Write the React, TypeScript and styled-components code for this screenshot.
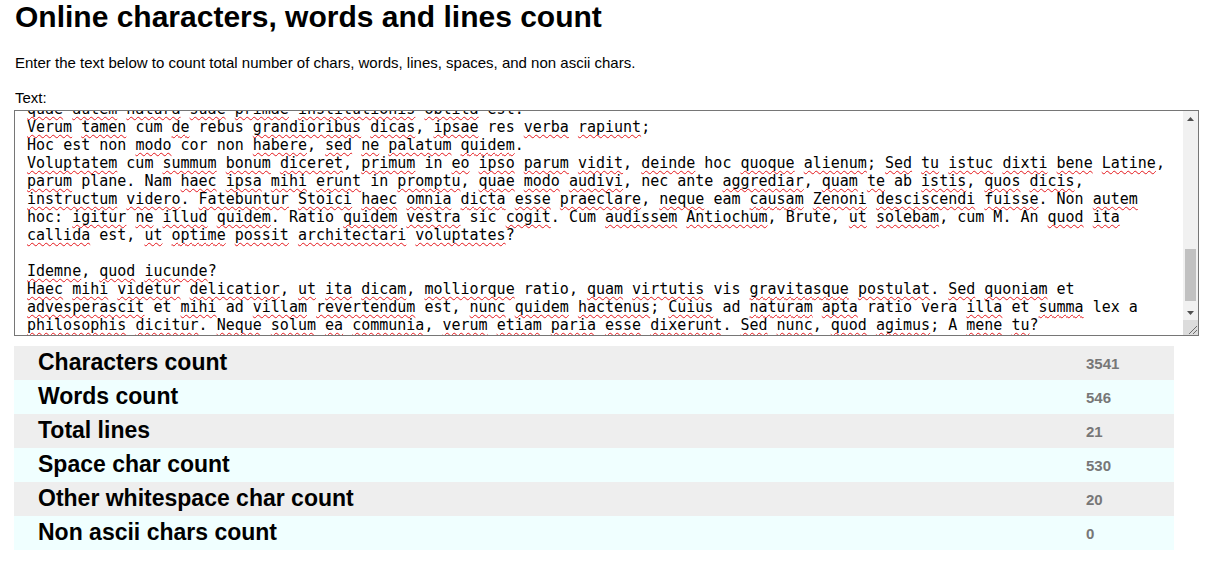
import React, { useLayoutEffect, useRef, useState } from "react";
import styled, { createGlobalStyle } from "styled-components";

const GlobalStyle = createGlobalStyle`
  html, body {
    margin: 0;
    padding: 0;
    background: #fff;
  }
  body {
    font-family: "Liberation Sans", Arial, sans-serif;
    color: #000;
  }
`;

const Page = styled.main`
  padding: 0 14px;
`;

const Title = styled.h1`
  margin: 0;
  font-size: 30px;
  font-weight: 700;
  line-height: 34px;
  padding-left: 1px;
`;

const Intro = styled.p`
  margin: 20px 0 0;
  font-size: 15px;
  line-height: 17px;
  padding-left: 1px;
`;

const FieldLabel = styled.label`
  display: block;
  margin-top: 18px;
  font-size: 15px;
  line-height: 17px;
  padding-left: 1px;
`;

// textarea look-alike: text box + classic scrollbar column
const TextFrame = styled.div`
  box-sizing: border-box;
  margin-top: 4px;
  width: 1185px;
  height: 226px;
  border: 1px solid #767676;
  display: flex;
  background: #fff;
`;

const Editor = styled.div`
  flex: 1;
  min-width: 0;
  padding: 2px 12px;
  font-family: "DejaVu Sans Mono", monospace;
  font-size: 15px;
  line-height: 18px;
  white-space: pre-wrap;
  overflow-wrap: break-word;
  overflow: hidden;
  outline: none;
  color: #000;
`;

const ScrollBar = styled.div`
  width: 15px;
  flex: none;
  display: flex;
  flex-direction: column;
  background: #f1f1f1;
`;

const ArrowButton = styled.div`
  height: 15px;
  flex: none;
  display: flex;
  align-items: center;
  justify-content: center;
  color: #505050;
`;

const Track = styled.div`
  flex: 1;
  display: flex;
  flex-direction: column;
`;

const Thumb = styled.div`
  margin: 0 2px;
  background: #c1c1c1;
`;

const Resizer = styled.div`
  height: 15px;
  flex: none;
  background: #dcdcdc;
  display: flex;
  align-items: flex-end;
  justify-content: flex-end;
`;

const Line = styled.div`
  min-height: 18px;
`;

const Misspelled = styled.span`
  text-decoration: underline wavy #e4161b;
  text-decoration-thickness: 1px;
  text-underline-offset: 2px;
  text-decoration-skip-ink: none;
`;

const Stats = styled.section`
  margin-top: 10px;
  width: 1160px;
`;

const StatRow = styled.div<{ $alt: boolean }>`
  display: grid;
  grid-template-columns: 1fr 88px;
  align-items: center;
  height: 34px;
  background: ${({ $alt }) => ($alt ? "#f0ffff" : "#eeeeee")};
`;

const StatLabel = styled.h2`
  margin: 0 0 3px;
  padding-left: 24px;
  font-size: 23px;
  font-weight: 700;
  line-height: 26px;
`;

const StatValue = styled.span`
  font-size: 15px;
  font-weight: 700;
  color: #777;
`;

const text = [
  "Lorem ipsum dolor sit amet, consectetur adipiscing elit. Quae cum dixisset paulumque institisset, Quid est? Nam ante Aristippus, et ille melius. Duo Reges: constructio interrete. Sed ad bona praeterita redeamus. Itaque hic ipse iam pridem est reiectus; Quis enim redargueret? Si quicquam extra virtutem habeatur in bonis. Tu quidem reddes; Quid ergo attinet gloriose loqui, nisi constanter loquare? Hoc mihi cum tuo fratre convenit. Quod cum accidisset ut alter alterum necopinato videremus.",
  "",
  "Nunc omni virtuti vitium contrario nomine opponitur.",
  "Primum in nostrane potestate est, quid meminerimus? Tria genera bonorum; Sin aliud quid voles, postea. Bonum integritas corporis: misera debilitas. Quamquam tu hanc copiosiorem etiam soles dicere. Nemo igitur esse beatus potest. Iam contemni non poteris. Non autem hoc: igitur ne illud quidem. Qui est in parvis malis. Quid, quod res alia tota est? Quae similitudo in genere etiam humano apparet. At multis malis affectus. Quod quidem nobis non saepe contingit. Sed haec omittamus; Respondeat totidem verbis.",
  "",
  "Quid iudicant sensus?",
  "Cur iustitia laudatur? Mihi enim satis est, ipsis non satis. Utram tandem linguam nescio? Ait enim se, si uratur, Quam hoc suave! dicturum. Proclivi currit oratio. Quis hoc dicit? Non enim iam stirpis bonum quaeret, sed animalis. Quae cum essent dicta, discessimus. Quid de Pythagora? Nos commodius agimus. Quae quidem sapientes sequuntur duce natura tamquam videntes; Sed quot homines, tot sententiae; Quonam modo? Illa videamus, quae a te de amicitia dicta sunt. Ego vero isti, inquam, permitto.",
  "Sed residamus, inquit, si placet. Memini vero, inquam; Haec dicuntur fortasse ieiunius; Minime vero, inquit ille, consentit. Nam Pyrrho, Aristo, Erillus iam diu abiecti. Zenonis est, inquam, hoc Stoici. Omnes enim iucundum motum, quo sensus hilaretur. An hoc usque quaque, aliter in vita? Sed tamen intellego quid velit.",
  "",
  "Sed nimis multa. Paulum, cum regem Persem captum adduceret, eodem flumine invectio? Ut aliquid scire se gaudeant? Quid enim est a Chrysippo praetermissum in Stoicis? Negabat igitur ullam esse artem, quae ipsa a se proficisceretur; Aliter enim explicari, quod quaeritur, non potest. Igitur ne dolorem quidem. Ita prorsus, inquam; Hic ambiguo ludimur. Sin kakan malitiam dixisses, ad aliud nos unum certum vitium consuetudo Latina traduceret. Ergo, inquit, tibi Q. Poterat autem inpune; Quorum sine causa fieri nihil putandum est.",
  "Audeo dicere, inquit. Tum mihi Piso: Quid ergo? Hanc quoque iucunditatem, si vis, transfer in animum; Quae qui non vident, nihil umquam magnum ac cognitione dignum amaverunt. At iam decimum annum in spelunca iacet. Bona autem corporis huic sunt, quod posterius posui, similiora. Et nemo nimium beatus est; Omnis enim est natura diligens sui.",
  "quae autem natura suae primae institutionis oblita est.",
  "Verum tamen cum de rebus grandioribus dicas, ipsae res verba rapiunt;",
  "Hoc est non modo cor non habere, sed ne palatum quidem.",
  "Voluptatem cum summum bonum diceret, primum in eo ipso parum vidit, deinde hoc quoque alienum; Sed tu istuc dixti bene Latine, parum plane. Nam haec ipsa mihi erunt in promptu, quae modo audivi, nec ante aggrediar, quam te ab istis, quos dicis, instructum videro. Fatebuntur Stoici haec omnia dicta esse praeclare, neque eam causam Zenoni desciscendi fuisse. Non autem hoc: igitur ne illud quidem. Ratio quidem vestra sic cogit. Cum audissem Antiochum, Brute, ut solebam, cum M. An quod ita callida est, ut optime possit architectari voluptates?",
  "",
  "Idemne, quod iucunde?",
  "Haec mihi videtur delicatior, ut ita dicam, molliorque ratio, quam virtutis vis gravitasque postulat. Sed quoniam et advesperascit et mihi ad villam revertendum est, nunc quidem hactenus; Cuius ad naturam apta ratio vera illa et summa lex a philosophis dicitur. Neque solum ea communia, verum etiam paria esse dixerunt. Sed nunc, quod agimus; A mene tu?",
  "Nam quid possumus facere melius?",
];

// words the spell checker accepts (the rest get the red squiggle)
const known = new Set([
  "cum", "rebus", "res", "hoc", "est", "non", "cor", "in", "plane", "nam", "nec",
  "ante", "ab", "eam", "ratio", "sic", "brute", "m", "an", "vis", "et", "ad",
  "vera", "lex", "a", "ego", "at", "q", "tot", "ac", "hic", "nos", "duo", "ille",
  "alter", "diu", "sane",
]);

function renderLine(line: string, i: number) {
  if (!line) return <Line key={i}>{"\n"}</Line>;
  const parts = line.split(/([A-Za-z]+)/);
  return (
    <Line key={i}>
      {parts.map((p, j) =>
        /^[A-Za-z]+$/.test(p) && !known.has(p.toLowerCase()) ? (
          <Misspelled key={j}>{p}</Misspelled>
        ) : (
          <React.Fragment key={j}>{p}</React.Fragment>
        )
      )}
    </Line>
  );
}

const stats = [
  { label: "Characters count", value: 3541 },
  { label: "Words count", value: 546 },
  { label: "Total lines", value: 21 },
  { label: "Space char count", value: 530 },
  { label: "Other whitespace char count", value: 20 },
  { label: "Non ascii chars count", value: 0 },
];

const TRACK = 224 - 15 * 3;

export default function App() {
  const ref = useRef<HTMLDivElement>(null);
  const [thumb, setThumb] = useState({ top: 123, size: 52 });

  useLayoutEffect(() => {
    const el = ref.current;
    if (!el) return;
    const max = el.scrollHeight - el.clientHeight;
    el.scrollTop = max - 19;
    const size = Math.max(18, Math.round((TRACK * el.clientHeight) / el.scrollHeight));
    const top = Math.round(((TRACK - size) * el.scrollTop) / max);
    setThumb({ top, size });
  }, []);

  return (
    <Page>
      <GlobalStyle />
      <Title>Online characters, words and lines count</Title>
      <Intro>
        Enter the text below to count total number of chars, words, lines, spaces, and non ascii chars.
      </Intro>
      <FieldLabel htmlFor="text">Text:</FieldLabel>
      <TextFrame>
        <Editor
          id="text"
          ref={ref}
          contentEditable
          suppressContentEditableWarning
          spellCheck={false}
          role="textbox"
          aria-multiline="true"
        >
          {text.map(renderLine)}
        </Editor>
        <ScrollBar aria-hidden="true">
          <ArrowButton>
            <svg width="7" height="4" viewBox="0 0 7 4">
              <polygon points="0,4 3.5,0 7,4" fill="currentColor" />
            </svg>
          </ArrowButton>
          <Track>
            <Thumb style={{ marginTop: thumb.top, height: thumb.size }} />
          </Track>
          <ArrowButton>
            <svg width="7" height="4" viewBox="0 0 7 4">
              <polygon points="0,0 7,0 3.5,4" fill="currentColor" />
            </svg>
          </ArrowButton>
          <Resizer>
            <svg width="15" height="15" viewBox="0 0 15 15">
              <path d="M14 6 L6 14 M14 10 L10 14" stroke="#6e6e6e" strokeWidth="1" />
            </svg>
          </Resizer>
        </ScrollBar>
      </TextFrame>
      <Stats>
        {stats.map((s, i) => (
          <StatRow key={s.label} $alt={i % 2 === 1}>
            <StatLabel>{s.label}</StatLabel>
            <StatValue>{s.value}</StatValue>
          </StatRow>
        ))}
      </Stats>
    </Page>
  );
}
